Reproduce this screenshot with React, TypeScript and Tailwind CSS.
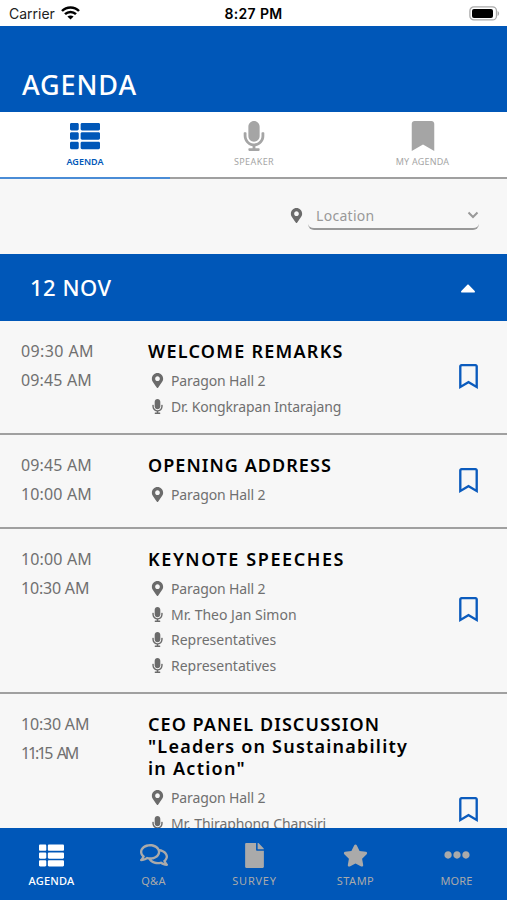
import React, { useState } from 'react';
import type { IconType } from 'react-icons';
import {
  FaBookmark,
  FaCaretUp,
  FaEllipsisH,
  FaFile,
  FaMapMarkerAlt,
  FaMicrophone,
  FaRegBookmark,
  FaRegComments,
  FaStar,
  FaThList,
} from 'react-icons/fa';

type Line = { text: string; className: string };

type Session = {
  start: Line;
  end: Line;
  title: Line[];
  details: { kind: 'place' | 'speaker'; text: string; className?: string }[];
  rowClass: string;
  markClass: string;
};

const hall = { kind: 'place' as const, text: 'Paragon Hall 2', className: 'tracking-[-0.13px]' };

const sessions: Session[] = [
  {
    start: { text: '09:30 AM', className: 'tracking-[0.4px]' },
    end: { text: '09:45 AM', className: 'tracking-[0.15px]' },
    title: [{ text: 'WELCOME REMARKS', className: 'tracking-[1.25px]' }],
    details: [hall, { kind: 'speaker', text: 'Dr. Kongkrapan Intarajang', className: 'tracking-[-0.13px]' }],
    rowClass: 'h-[114px]',
    markClass: 'mt-[43px]',
  },
  {
    start: { text: '09:45 AM', className: 'tracking-[0.15px]' },
    end: { text: '10:00 AM', className: 'tracking-[0.15px]' },
    title: [{ text: 'OPENING ADDRESS', className: 'tracking-[1.05px]' }],
    details: [hall],
    rowClass: 'h-[94px]',
    markClass: 'mt-[33px]',
  },
  {
    start: { text: '10:00 AM', className: 'tracking-[0.15px]' },
    end: { text: '10:30 AM', className: 'tracking-[-0.2px]' },
    title: [{ text: 'KEYNOTE SPEECHES', className: 'tracking-[1.6px]' }],
    details: [
      hall,
      { kind: 'speaker', text: 'Mr. Theo Jan Simon' },
      { kind: 'speaker', text: 'Representatives' },
      { kind: 'speaker', text: 'Representatives' },
    ],
    rowClass: 'h-[165px]',
    markClass: 'mt-[68px]',
  },
  {
    start: { text: '10:30 AM', className: 'tracking-[-0.2px]' },
    end: { text: '11:15 AM', className: 'tracking-[-2.1px] [word-spacing:3.2px]' },
    title: [
      { text: 'CEO PANEL DISCUSSION', className: 'tracking-[1.05px]' },
      { text: '"Leaders on Sustainability', className: 'tracking-[1.22px]' },
      { text: 'in Action"', className: 'tracking-[1.25px]' },
    ],
    details: [hall, { kind: 'speaker', text: 'Mr. Thiraphong Chansiri', className: 'tracking-[-0.1px]' }],
    rowClass: 'h-[165px]',
    markClass: 'mt-[103px]',
  },
];

const menu: { label: string; Icon: IconType; iconClass: string; labelClass: string }[] = [
  { label: 'AGENDA', Icon: FaThList, iconClass: 'text-[25px]', labelClass: 'tracking-[0.2px] font-medium' },
  { label: 'Q&A', Icon: FaRegComments, iconClass: 'text-[28px]', labelClass: 'tracking-[0.3px]' },
  { label: 'SURVEY', Icon: FaFile, iconClass: 'text-[25px]', labelClass: 'tracking-[0.75px]' },
  { label: 'STAMP', Icon: FaStar, iconClass: 'text-[25px]', labelClass: 'tracking-[0.5px]' },
  { label: 'MORE', Icon: FaEllipsisH, iconClass: 'text-[26px]', labelClass: 'tracking-[0.1px]' },
];

function StatusBar() {
  return (
    <div className="grid h-[26px] shrink-0 grid-cols-3 items-center bg-white px-[9px] font-['Inter',sans-serif] text-[14px] text-black">
      <div className="flex items-center gap-[6px]">
        <span className="text-[#222]">Carrier</span>
        <svg width="19" height="14" viewBox="0 0 19 14" fill="none" stroke="currentColor" strokeWidth="2.5">
          <path d="M1 5C5.7 0.2 13.3 0.2 18 5" />
          <path d="M4 8.2C7.1 5.2 11.9 5.2 15 8.2" />
          <path d="M6.4 10.6C8.2 9 10.8 9 12.6 10.6L9.5 13.6Z" fill="currentColor" stroke="none" />
        </svg>
      </div>
      <div className="text-center font-semibold tracking-[0.35px] whitespace-nowrap">8:27 PM</div>
      <svg className="-mr-[2px] justify-self-end" width="31" height="15" viewBox="0 0 31 15">
        <rect x="0.9" y="0.9" width="26.6" height="13" rx="4" fill="none" stroke="#aaa" strokeWidth="1.3" />
        <rect x="3" y="3" width="21" height="9" rx="2" fill="#000" />
        <path d="M28.6 5v5c2-1 2-4 0-5z" fill="#aaa" />
      </svg>
    </div>
  );
}

function SessionRow({ session }: { session: Session }) {
  return (
    <div className={`flex shrink-0 border-b-2 border-[#a0a0a0] pl-[21px] ${session.rowClass}`}>
      <div className="w-[127px] shrink-0 whitespace-nowrap pt-[16px] text-[16px] leading-[29px] text-[#707070]">
        <div className={session.start.className}>{session.start.text}</div>
        <div className={session.end.className}>{session.end.text}</div>
      </div>
      <div className="flex-1 whitespace-nowrap pt-[19px]">
        {session.title.map((line) => (
          <div key={line.text} className={`text-[18px] leading-[22px] font-semibold text-black ${line.className}`}>
            {line.text}
          </div>
        ))}
        <div className="pt-[6px]">
          {session.details.map((d, i) => (
            <div key={i} className="flex h-[25.6px] items-center text-[14px] text-[#707070]">
              <span className="mr-[5px] flex w-[18px] justify-center text-[15px] text-[#6b6b6b]">
                {d.kind === 'place' ? <FaMapMarkerAlt /> : <FaMicrophone />}
              </span>
              <span className={d.className}>{d.text}</span>
            </div>
          ))}
        </div>
      </div>
      <FaRegBookmark className={`mr-[26px] shrink-0 text-[25px] text-[#0b5bbd] ${session.markClass}`} />
    </div>
  );
}

export default function App() {
  const [open, setOpen] = useState(true);

  return (
    <div className="flex h-[900px] w-[507px] flex-col overflow-hidden bg-[#f7f7f7] font-['Noto_Sans',sans-serif]">
      <StatusBar />
      <header className="flex h-[86px] shrink-0 items-end bg-[#0057b8] pb-[7px] pl-[22px]">
        <h1 className="text-[27px] font-medium leading-[40px] tracking-[0.9px] text-white">AGENDA</h1>
      </header>

      <nav className="grid h-[67px] shrink-0 grid-cols-[170px_1fr_169px] bg-white text-[9px] text-[#a5a5a5]">
        <button className="flex flex-col items-center border-b-2 border-[#4a8cd6] pt-[9px] text-[#0057b8]">
          <FaThList className="text-[30px]" />
          <span className="mt-[5px] font-semibold leading-[12px]">AGENDA</span>
        </button>
        <button className="flex flex-col items-center border-b-2 border-[#a0a0a0] pt-[9px]">
          <FaMicrophone className="text-[30px]" />
          <span className="mt-[5px] leading-[12px] tracking-[0.4px]">SPEAKER</span>
        </button>
        <button className="flex flex-col items-center border-b-2 border-[#a0a0a0] pt-[9px]">
          <FaBookmark className="text-[30px]" />
          <span className="mt-[5px] leading-[12px] tracking-[0.2px]">MY AGENDA</span>
        </button>
      </nav>

      <div className="flex h-[75px] shrink-0 justify-end pr-[28px] pt-[25px]">
        <FaMapMarkerAlt className="mr-[4px] mt-[4px] text-[15px] text-[#6b6b6b]" />
        <div className="flex h-[26px] w-[171px] items-center justify-between rounded-[6px] border-b-2 border-[#999] pb-[2px] pl-[8px] text-[14px] text-[#999]">
          <span className="tracking-[0.3px]">Location</span>
          <svg width="12" height="8" viewBox="0 0 12 8" fill="none" stroke="#999" strokeWidth="2">
            <path d="M1.5 1.5L6 6l4.500-4.500" />
          </svg>
        </div>
      </div>

      <button
        className="flex h-[67px] shrink-0 items-center justify-between bg-[#0057b8] pl-[30px] pr-[27px] text-white"
        onClick={() => setOpen(!open)}
      >
        <span className="text-[22px] font-medium tracking-[0.5px]">12 NOV</span>
        <FaCaretUp className={`text-[24px] ${open ? '' : 'rotate-180'}`} />
      </button>

      <main className="flex min-h-0 flex-1 flex-col overflow-hidden">
        {open && sessions.map((s) => <SessionRow key={s.start.text} session={s} />)}
      </main>

      <footer className="grid h-[72px] shrink-0 grid-cols-[103px_repeat(3,101px)_101px] bg-[#0057b8] text-[11px] text-[#aaa]">
        {menu.map(({ label, Icon, iconClass, labelClass }, i) => (
          <button key={label} className={`flex flex-col items-center pt-[13px] ${i === 0 ? 'text-white' : ''}`}>
            <span className="flex h-[28px] items-center">
              <Icon className={iconClass} />
            </span>
            <span className={`mt-[4px] leading-[16px] ${labelClass}`}>{label}</span>
          </button>
        ))}
      </footer>
    </div>
  );
}
